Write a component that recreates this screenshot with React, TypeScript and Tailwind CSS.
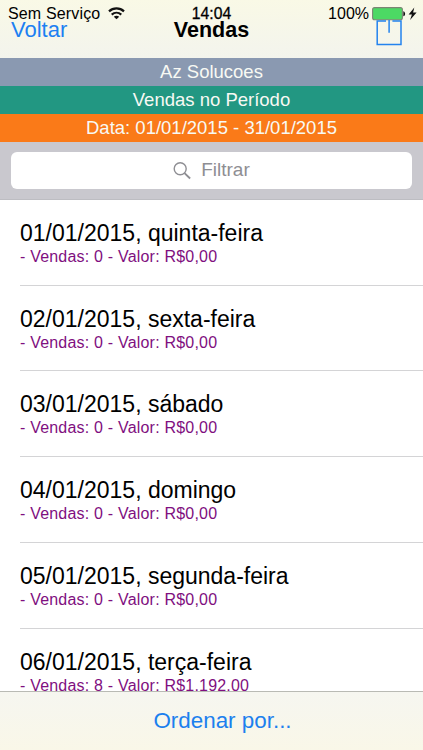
import React from "react";

const SALES = [
  { date: "01/01/2015", weekday: "quinta-feira", count: 0, total: "0,00" },
  { date: "02/01/2015", weekday: "sexta-feira", count: 0, total: "0,00" },
  { date: "03/01/2015", weekday: "sábado", count: 0, total: "0,00" },
  { date: "04/01/2015", weekday: "domingo", count: 0, total: "0,00" },
  { date: "05/01/2015", weekday: "segunda-feira", count: 0, total: "0,00" },
  { date: "06/01/2015", weekday: "terça-feira", count: 8, total: "1.192,00" },
];

function WifiIcon() {
  return (
    <svg width="17" height="13" viewBox="0 0 17 13" fill="none" stroke="#111">
      <path d="M1 4.4C5.2.4 11.8.4 16 4.4" strokeWidth="2.2" />
      <path d="M3.7 7.6c2.8-2.5 6.8-2.5 9.6 0" strokeWidth="2.1" />
      <path d="M8.5 12.3 5.8 9.7c1.5-1.3 3.9-1.3 5.4 0Z" fill="#111" stroke="none" />
    </svg>
  );
}

function BatteryIcon() {
  return (
    <svg width="48" height="14" viewBox="0 0 48 14">
      <rect x=".6" y=".6" width="29.8" height="12.2" rx="2" fill="#4cd964" stroke="#7c8574" strokeWidth="1.1" />
      <path d="M31.3 4.2c2.4.3 2.4 4.8 0 5.1Z" fill="#111" />
      <path d="M42.3 .4 36.6 7.6h3.3L38.1 13 44.6 5.6h-3.5Z" fill="#111" />
    </svg>
  );
}

function ShareIcon() {
  return (
    <svg width="27" height="27" viewBox="0 0 27 27" fill="none" stroke="#2383ee" strokeWidth="1.5">
      <path d="M10 .9H1.2V24.5H25V.9H16.4" />
      <path d="M13.1 0v12.7" />
    </svg>
  );
}

function SearchIcon() {
  return (
    <svg width="18" height="18" viewBox="0 0 18 18" fill="none" stroke="#8e8e93">
      <circle cx="7.2" cy="6.8" r="6" strokeWidth="1.4" />
      <path d="m11.5 11.1 5.6 5.4" strokeWidth="1.9" />
    </svg>
  );
}

export default function App() {
  return (
    <div className="flex h-[750px] w-[423px] flex-col overflow-hidden bg-white font-['Liberation_Sans',Arial,sans-serif] text-black">
      <header className="h-[58px] shrink-0 bg-linear-to-b from-[#f9f9e6] to-[#f3f4ed]">
        <div className="grid h-5 grid-cols-3 pt-[5px] text-[16px] leading-[18px]">
          <div className="flex gap-2 pl-2">
            <span className="whitespace-nowrap tracking-[0.15px]">Sem Serviço</span>
            <span className="pt-0.5">
              <WifiIcon />
            </span>
          </div>
          <span className="text-center text-[15.7px] [-webkit-text-stroke:0.3px_black]">14:04</span>
          <div className="flex justify-end gap-[3px] pr-[3px]">
            <span>100%</span>
            <span className="pt-[2px]">
              <BatteryIcon />
            </span>
          </div>
        </div>
        <div className="grid h-[38px] grid-cols-3 text-[22px] leading-5">
          <button className="h-5 pl-[11px] text-left text-[#1c80f2]">Voltar</button>
          <h1 className="h-5 text-center text-[21.5px] font-bold">Vendas</h1>
          <button className="flex h-7 justify-end pr-5">
            <ShareIcon />
          </button>
        </div>
      </header>

      <section className="shrink-0 text-center text-[18.5px] leading-7 text-[#f8f9f4]">
        <p className="h-7 bg-[#8a99b1]">Az Solucoes</p>
        <p className="h-7 bg-[#229782]">Vendas no Período</p>
        <p className="h-7 bg-[#fa7a18]">Data: 01/01/2015 - 31/01/2015</p>
      </section>

      <div className="h-[57.5px] shrink-0 border-b border-[#bdbdc2] bg-[#c9c8ce] px-[11px] pt-[10px]">
        <div className="flex h-[37px] items-center justify-center gap-2.5 rounded-[6px] bg-white text-[19px] text-[#8e8e93]">
          <SearchIcon />
          <span>Filtrar</span>
        </div>
      </div>

      <ul className="min-h-0 flex-1 overflow-hidden pl-5 pt-[0.4px]">
        {SALES.map(({ date, weekday, count, total }) => (
          <li key={date} className="h-[85.8px] border-b border-[#d4d4d6] pt-[20px]">
            <h2 className="text-[23px] leading-[27px]">
              {date}, {weekday}
            </h2>
            <p className="text-[16px] leading-5 tracking-[0.2px] text-[#800f80]">
              - Vendas: {count} - Valor: R${total}
            </p>
          </li>
        ))}
      </ul>

      <footer className="flex h-[59px] shrink-0 items-center justify-center border-t border-[#b9bab4] bg-linear-to-b from-[#f6f6f0] to-[#f9f7e8] pl-[22px]">
        <button className="text-[22.4px] text-[#1c80ee]">Ordenar por...</button>
      </footer>
    </div>
  );
}
